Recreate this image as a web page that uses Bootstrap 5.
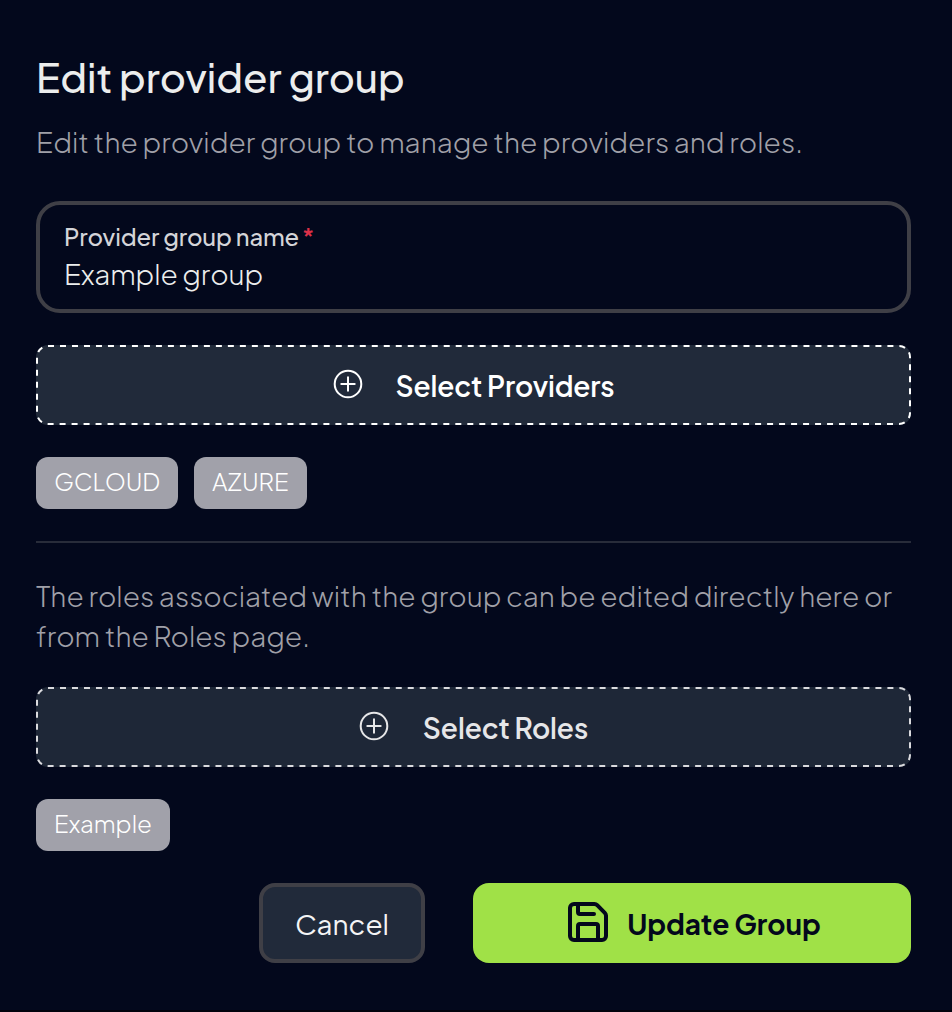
<!DOCTYPE html>
<html lang="en">
<head>
<meta charset="utf-8">
<meta name="viewport" content="width=device-width, initial-scale=1">
<title>Edit provider group</title>
<link href="https://cdn.jsdelivr.net/npm/bootstrap@5.3.0/dist/css/bootstrap.min.css" rel="stylesheet">
<style>
body{background:#03081c;font-family:"Plus Jakarta Sans",Inter,sans-serif;font-size:28px;line-height:40px;color:#eceded}
.panel{height:1012px;padding:49px 41px 0 36px;border-bottom:2px solid #01030d}
h1{font-size:40px;line-height:56px;font-weight:480;letter-spacing:-.03px}
.muted-text{color:#a0a0a8;font-weight:350}
.intro{margin:17px 0 39px}
.field-box{height:112px;border:4px solid #3f3f46;border-radius:24px;padding:13px 24px 0}
.field-box label{font-size:23.8px;line-height:36px;color:#d4d4d8;font-weight:520;letter-spacing:-.13px}
.field-box input{all:unset;display:block;width:100%;height:40px;line-height:40px;font-weight:350;letter-spacing:-.08px;color:#eceded}
.star{color:#dc3048;font-weight:650;margin-left:-1px}
.pick{height:80px;border:0;border-radius:12px;background:#212a3a;color:#fff;font-size:28px;font-weight:580;padding:2px 0 0;gap:33px;margin-top:32px;letter-spacing:-.15px}
.pick .plus{margin-top:-4px}
.pick .dashes{top:0;left:0}
.pick.dim{background:#1e2737;color:#e6e6e8;gap:34px;margin-top:31px;letter-spacing:-.11px}
.pick.dim .dashes{color:#dadade}
.chips{margin-top:32px}
.chip{height:52px;border-radius:12px;background:#a1a1aa;color:#fff;font-size:24px;font-weight:350;line-height:49px;padding:0 18px}
.chip.caps{letter-spacing:-.1px}
.chip.caps + .chip.caps{letter-spacing:0;padding-right:18.5px}
.rule{height:2px;background:#282c3a;margin:32px 0 33px}
.act{height:80px;border-radius:16px;font-size:28px}
.cancel{width:166px;border:4px solid #3f3f46;background:#212a3a;color:#f4f4f5;font-weight:450;padding:8px 0 6px}
.update{width:438px;background:#a0e147;color:#03081c;font-weight:720;gap:15px;padding:8px 0 6px 1px;letter-spacing:-.03px}
.update svg{margin-top:-4px}
</style>
</head>
<body>
<main class="panel">
  <h1 class="mb-0">Edit provider group</h1>
  <p class="muted-text intro">Edit the provider group to manage the providers and roles.</p>
  <div class="field-box">
    <label class="d-block" for="gname">Provider group name <span class="star">*</span></label>
    <input id="gname" value="Example group">
  </div>
  <button class="pick btn w-100 d-flex align-items-center justify-content-center position-relative">
    <svg class="dashes position-absolute" width="875" height="80" fill="none" stroke="currentColor" stroke-width="2"><rect x="1" y="1" width="873" height="78" rx="11" pathLength="1884" stroke-dasharray="6 6"/></svg>
    <svg class="plus" width="30" height="30" viewBox="0 0 30 30" fill="none" stroke="currentColor" stroke-width="2" stroke-linecap="round"><circle cx="15" cy="15" r="13.3"/><path d="M15 8.3v13.4M8.3 15h13.4"/></svg>
    <span>Select Providers</span>
  </button>
  <div class="chips d-flex gap-3"><span class="chip caps">GCLOUD</span><span class="chip caps">AZURE</span></div>
  <div class="rule"></div>
  <p class="muted-text mb-0">The roles associated with the group can be edited directly here or from the Roles page.</p>
  <button class="pick dim btn w-100 d-flex align-items-center justify-content-center position-relative" id="roles">
    <svg class="dashes position-absolute" width="875" height="80" fill="none" stroke="currentColor" stroke-width="2"><rect x="1" y="1" width="873" height="78" rx="11" pathLength="1884" stroke-dasharray="6 6"/></svg>
    <svg class="plus" width="30" height="30" viewBox="0 0 30 30" fill="none" stroke="currentColor" stroke-width="2" stroke-linecap="round"><circle cx="15" cy="15" r="13.3"/><path d="M15 8.3v13.4M8.3 15h13.4"/></svg>
    <span>Select Roles</span>
  </button>
  <div class="chips d-flex"><span class="chip">Example</span></div>
  <div class="chips d-flex justify-content-end gap-5">
    <button class="btn act cancel">Cancel</button>
    <button class="btn act update d-flex align-items-center justify-content-center">
      <svg width="48" height="48" viewBox="0 0 24 24" fill="none" stroke="currentColor" stroke-width="2" stroke-linecap="round" stroke-linejoin="round"><path d="M15.2 3a2 2 0 0 1 1.4.6l3.8 3.8a2 2 0 0 1 .6 1.4V19a2 2 0 0 1-2 2H5a2 2 0 0 1-2-2V5a2 2 0 0 1 2-2z"/><path d="M17 21v-7a1 1 0 0 0-1-1H8a1 1 0 0 0-1 1v7M7 3v4a1 1 0 0 0 1 1h7"/></svg>
      <span>Update Group</span>
    </button>
  </div>
</main>
<script src="https://cdn.jsdelivr.net/npm/bootstrap@5.3.0/dist/js/bootstrap.bundle.min.js"></script>
</body>
</html>
